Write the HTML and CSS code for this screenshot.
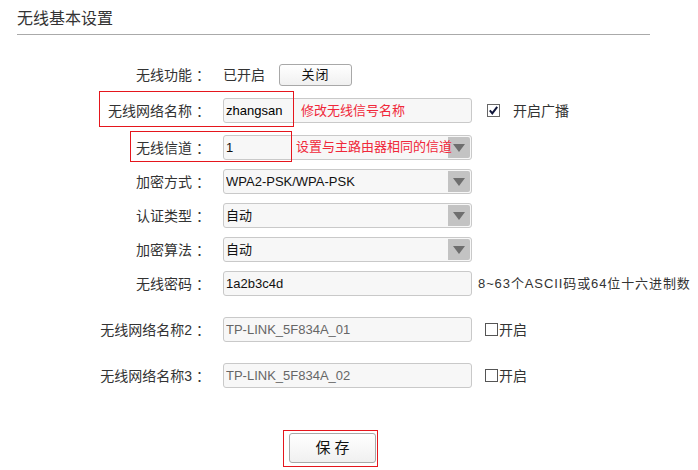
FILE: index.html
```html
<!DOCTYPE html>
<html lang="zh-CN">
<head>
<meta charset="utf-8">
<title>无线基本设置</title>
<link rel="stylesheet" href="styles.css">
</head>
<body>
<div class="page">
  <h1 class="title">无线基本设置</h1>
  <div class="form">
    <div class="row">
      <div class="label">无线功能<span class="colon">：</span></div>
      <div class="value">
        <span class="status">已开启</span>
        <button class="btn btn-off">关闭</button>
      </div>
    </div>
    <div class="row gap3">
      <div class="label">无线网络名称<span class="colon">：</span></div>
      <div class="value">
        <div class="field strong"><span class="ftext">zhangsan</span></div>
        <span class="check"><svg width="13" height="13" viewBox="0 0 13 13"><rect x="0.5" y="0.5" width="12" height="12" fill="#fff" stroke="#666"/><path d="M2.8 6.3 L5.3 9.3 L10.2 2.8" fill="none" stroke="#10163a" stroke-width="2"/></svg></span>
        <span class="check-label">开启广播</span>
      </div>
    </div>
    <div class="row gap4">
      <div class="label">无线信道<span class="colon">：</span></div>
      <div class="value">
        <div class="field"><span class="ftext">1</span><span class="arrow"></span></div>
      </div>
    </div>
    <div class="row">
      <div class="label">加密方式<span class="colon">：</span></div>
      <div class="value">
        <div class="field"><span class="ftext">WPA2-PSK/WPA-PSK</span><span class="arrow"></span></div>
      </div>
    </div>
    <div class="row">
      <div class="label">认证类型<span class="colon">：</span></div>
      <div class="value">
        <div class="field"><span class="ftext">自动</span><span class="arrow"></span></div>
      </div>
    </div>
    <div class="row">
      <div class="label">加密算法<span class="colon">：</span></div>
      <div class="value">
        <div class="field"><span class="ftext">自动</span><span class="arrow"></span></div>
      </div>
    </div>
    <div class="row">
      <div class="label">无线密码<span class="colon">：</span></div>
      <div class="value">
        <div class="field"><span class="ftext">1a2b3c4d</span></div>
        <span class="hint">8~63个ASCII码或64位十六进制数</span>
      </div>
    </div>
    <div class="row gap13">
      <div class="label">无线网络名称2<span class="colon">：</span></div>
      <div class="value">
        <div class="field muted"><span class="ftext">TP-LINK_5F834A_01</span></div>
        <span class="box"></span><span class="box-label">开启</span>
      </div>
    </div>
    <div class="row gap13">
      <div class="label">无线网络名称3<span class="colon">：</span></div>
      <div class="value">
        <div class="field muted"><span class="ftext">TP-LINK_5F834A_02</span></div>
        <span class="box"></span><span class="box-label">开启</span>
      </div>
    </div>
    <div class="actions">
      <button class="btn btn-save">保存</button>
    </div>
  </div>

  <div class="mark mark-ssid"></div>
  <div class="mark mark-channel"></div>
  <div class="mark mark-save"></div>
  <span class="note note-ssid">修改无线信号名称</span>
  <span class="note note-channel">设置与主路由器相同的信道</span>
</div>
</body>
</html>
```

FILE: styles.css
```css
html, body {
  margin: 0;
  padding: 0;
  background: #fff;
}

body {
  font-family: "Liberation Sans", "Noto Sans CJK SC", sans-serif;
  color: #333;
}

.page {
  position: relative;
  width: 698px;
  height: 470px;
  overflow: hidden;
}

.title {
  margin: 0 0 0 17px;
  width: 633px;
  padding: 8px 0 4px;
  font-size: 16px;
  font-weight: normal;
  line-height: 22px;
  color: #333;
  border-bottom: 1px solid #aaa;
}

.form {
  margin-top: 23px;
}

.row {
  display: flex;
  align-items: center;
  height: 33px;
  margin-top: 1px;
}

.row:first-child {
  margin-top: 0;
}

.row.gap3 { margin-top: 3px; }
.row.gap4 { margin-top: 4px; }
.row.gap13 { margin-top: 13px; }

.label {
  flex: none;
  width: 210px;
  text-align: right;
  font-size: 14px;
  line-height: 20px;
  color: #333;
}

.colon {
  margin-left: 4px;
}

.value {
  margin-left: 13px;
  display: flex;
  align-items: center;
}

.status {
  width: 56px;
  font-size: 14px;
  line-height: 20px;
  color: #333;
}

.btn {
  font-family: "Liberation Sans", "Noto Sans CJK SC", sans-serif;
  box-sizing: border-box;
  padding: 0;
  border: 1px solid #a8a8a8;
  border-radius: 3px;
  background: linear-gradient(#ffffff, #f0f0f0);
  color: #111;
  cursor: pointer;
}

.btn-off {
  width: 73px;
  height: 22px;
  font-size: 13px;
  letter-spacing: 1px;
  line-height: 18px;
}

.field {
  box-sizing: border-box;
  width: 249px;
  height: 25px;
  border: 1px solid #c9c9c9;
  border-radius: 3px;
  background: #f7f7f7;
  display: flex;
  align-items: center;
  padding: 1px 1px 1px 2px;
  font-size: 13px;
  line-height: 18px;
  color: #111;
}

.field.strong {
  color: #000;
}

.field.muted {
  color: #666;
}

.ftext {
  flex: 1;
  white-space: nowrap;
  overflow: hidden;
}

.arrow {
  flex: none;
  width: 22px;
  align-self: stretch;
  background: #c3c3c3;
  border-radius: 0 2px 2px 0;
  display: flex;
  align-items: center;
  justify-content: center;
}

.arrow::after {
  content: "";
  width: 0;
  height: 0;
  border-left: 6px solid transparent;
  border-right: 6px solid transparent;
  border-top: 8px solid #6e6e6e;
}

.check {
  margin-left: 15px;
  width: 13px;
  height: 13px;
  display: flex;
}

.check-label {
  margin-left: 13px;
  font-size: 14px;
  line-height: 20px;
  color: #333;
}

.hint {
  margin-left: 6px;
  font-size: 13px;
  letter-spacing: 0.9px;
  line-height: 18px;
  color: #333;
  white-space: nowrap;
}

.box {
  margin-left: 13px;
  box-sizing: border-box;
  width: 13px;
  height: 13px;
  border: 1px solid #555;
  background: #fff;
}

.box-label {
  margin-left: 1px;
  font-size: 14px;
  line-height: 20px;
  color: #333;
}

.actions {
  margin-top: 41px;
  padding-left: 289px;
}

.btn-save {
  width: 87px;
  height: 30px;
  font-size: 15px;
  letter-spacing: 4px;
  padding-left: 4px;
  line-height: 20px;
}

.mark {
  position: absolute;
  box-sizing: border-box;
  border: 1px solid #e5161d;
}

.mark-ssid {
  left: 99px;
  top: 91px;
  width: 195px;
  height: 36px;
}

.mark-channel {
  left: 130px;
  top: 131px;
  width: 162px;
  height: 31px;
}

.mark-save {
  left: 283px;
  top: 430px;
  width: 95px;
  height: 37px;
}

.note {
  position: absolute;
  font-size: 13px;
  line-height: 18px;
  color: #f0283a;
  white-space: nowrap;
}

.note-ssid {
  left: 301px;
  top: 102px;
}

.note-channel {
  left: 296px;
  top: 138px;
}
```
